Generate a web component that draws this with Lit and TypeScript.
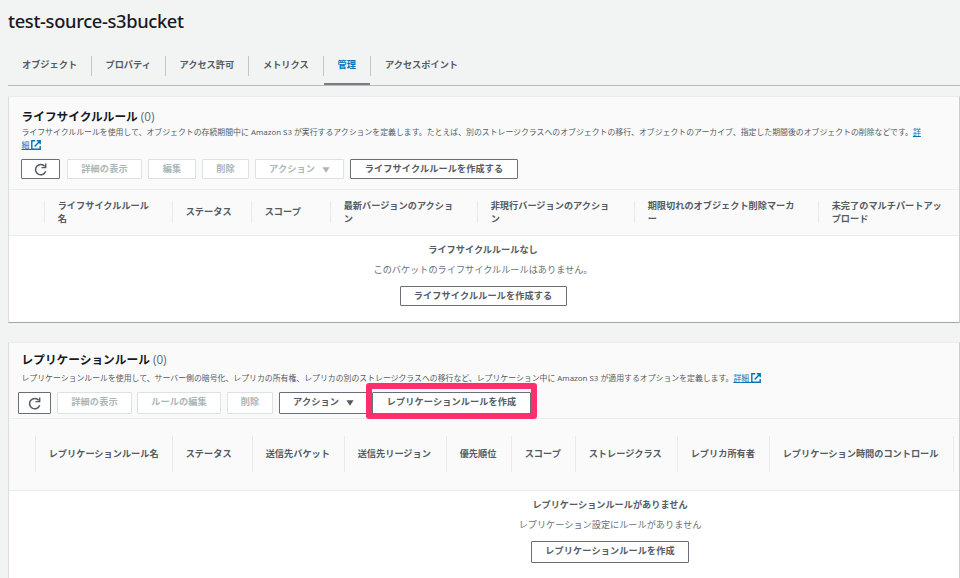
import { LitElement, html, css, svg } from "lit";
import { customElement, property } from "lit/decorators.js";
import { styleMap } from "lit/directives/style-map.js";
import { classMap } from "lit/directives/class-map.js";

interface Btn {
  label: string;
  width: number;
  gap: number;
  kind?: "refresh" | "menu";
  disabled?: boolean;
  marked?: boolean;
}
interface Col {
  label: string;
  width: number;
}

const TABS = [
  { label: "オブジェクト", width: 83.5 },
  { label: "プロパティ", width: 74 },
  { label: "アクセス許可", width: 83.5 },
  { label: "メトリクス", width: 74.5 },
  { label: "管理", width: 47.5, active: true },
  { label: "アクセスポイント", width: 102 },
];

const refreshIcon = svg`<path d="M10 3.1A4.8 4.8 0 1 0 10.8 7.7" fill="none" stroke="currentColor" stroke-width="1.4"/><path d="M10.8 0.5V4.3H6.9" fill="none" stroke="currentColor" stroke-width="1.3"/>`;

@customElement("aws-button")
export class AwsButton extends LitElement {
  @property({ type: Object }) data!: Btn;
  static styles = css`
    :host { display: block; flex: none; height: 100%; position: relative; }
    .btn {
      box-sizing: border-box; width: 100%; height: 100%; margin: 0; padding: 0 0 var(--lift, 0px);
      display: flex; align-items: center; justify-content: center; gap: 7px;
      background: #fff; border: 1px solid #686f78; border-radius: 1px; color: #545b64;
      font: 700 9.17px/12px "Noto Sans", "Noto Sans CJK JP", sans-serif;
      letter-spacing: 0.1px; white-space: nowrap;
    }
    .disabled { color: #aab7b8; border-color: #dce1e1; }
    .icon { width: 13px; height: 13px; display: block; margin-top: var(--lift, 0px); }
    .caret { width: 8px; height: 6px; display: block; margin-top: 1px; }
    .mark {
      position: absolute; left: -6px; top: -9px; width: 171px; height: 36px;
      box-sizing: border-box; border: 6px solid #ff2e6c; border-radius: 3px;
    }
  `;
  render() {
    const d = this.data;
    return html`<button class=${classMap({ btn: true, disabled: !!d.disabled })}>
        ${d.kind === "refresh"
          ? html`<svg class="icon" viewBox="0 0 12 12">${refreshIcon}</svg>`
          : html`<span>${d.label}</span>`}
        ${d.kind === "menu"
          ? html`<svg class="caret" viewBox="0 0 8 6"><path d="M.4 .3H7.6L4 5.8Z" fill="currentColor" /></svg>`
          : null}
      </button>
      ${d.marked ? html`<div class="mark"></div>` : null}`;
  }
}

@customElement("rule-card")
export class RuleCard extends LitElement {
  @property() heading = "";
  @property({ type: Array }) buttons: Btn[] = [];
  @property({ type: Array }) columns: Col[] = [];
  @property() emptyTitle = "";
  @property() emptyText = "";
  @property({ type: Object }) emptyButton!: Btn;
  @property({ type: Boolean, reflect: true }) tall = false;
  static styles = css`
    :host {
      display: block; box-sizing: border-box; width: 952px; height: 227px;
      border: 1px solid #d9dddd; border-top-color: #eaeded; border-right-color: #c9cdcf; border-bottom-color: #9ea8ab;
      background: #fff; color: #545b64;
    }
    .head { box-sizing: border-box; height: 93px; padding: 11px 0 0 12px; background: #fafafa; border-bottom: 1px solid #eaeded; }
    h2 { margin: 0; height: 16px; padding-left: 0.5px; font-size: 11.7px; line-height: 16px; font-weight: 700; color: #16191f; white-space: nowrap; }
    h2 span { font-weight: 400; color: #687078; }
    .desc { height: 26px; width: 912px; padding-left: 0.5px; font-size: 7.89px; line-height: 13px; margin-top: 2px; word-break: break-all; white-space: nowrap; }
    .bar { display: flex; height: 20px; margin-top: 7px; }
    .cols { box-sizing: border-box; height: 46px; padding: 11px 0 12px; display: flex; background: #fafafa; border-bottom: 1px solid #eaeded; }
    .col {
      box-sizing: border-box; flex: none; display: flex; align-items: center; padding: 0 0 1px 12.7px;
      border-left: 1px solid #e9ebeb; font-size: 9.18px; line-height: 13px; font-weight: 700; white-space: pre;
    }
    .lead { border-left: 0; }
    .empty { display: flex; flex-direction: column; align-items: center; padding: 7px 2px 0 0; font-size: 9.17px; line-height: 14px; }
    .empty b { color: #545b64; }
    .sub { margin-top: 6px; color: #687078; }
    .emptybtn { height: 20px; margin-top: 9px; }
    :host([tall]) { height: 260px; border-bottom: 0; }
    :host([tall]) .head { height: 76px; padding-top: 8px; }
    :host([tall]) .desc { height: 13px; margin-top: 5px; }
    :host([tall]) .bar { height: 22px; margin: 7px 0 0 -3px; --lift: 2px; }
    :host([tall]) .cols { height: 72px; padding: 17px 0 18px; }
    :host([tall]) .empty { padding-left: 254px; }
    :host([tall]) .emptybtn { height: 22px; margin-top: 9px; --lift: 2px; }
  `;
  render() {
    return html`
      <div class="head">
        <h2>${this.heading} <span>(0)</span></h2>
        <div class="desc"><slot></slot></div>
        <div class="bar">
          ${this.buttons.map(
            (b) => html`<aws-button .data=${b} style=${styleMap({ width: b.width + "px", marginRight: b.gap + "px" })}></aws-button>`
          )}
        </div>
      </div>
      <div class="cols">
        ${this.columns.map(
          (c, i) => html`<div class=${classMap({ col: true, lead: i === 0 })} style=${styleMap({ width: c.width + "px" })}>${c.label}</div>`
        )}
      </div>
      <div class="empty">
        <b>${this.emptyTitle}</b>
        <div class="sub">${this.emptyText}</div>
        <div class="emptybtn"><aws-button .data=${this.emptyButton} style=${styleMap({ width: this.emptyButton.width + "px" })}></aws-button></div>
      </div>`;
  }
}

const LIFE_BUTTONS: Btn[] = [
  { label: "", width: 39, gap: 7, kind: "refresh" },
  { label: "詳細の表示", width: 75, gap: 6, disabled: true },
  { label: "編集", width: 48, gap: 6, disabled: true },
  { label: "削除", width: 47, gap: 6, disabled: true },
  { label: "アクション", width: 89, gap: 6, kind: "menu", disabled: true },
  { label: "ライフサイクルルールを作成する", width: 168, gap: 0 },
];
const REPL_BUTTONS: Btn[] = [
  { label: "", width: 33, gap: 6, kind: "refresh" },
  { label: "詳細の表示", width: 75, gap: 5, disabled: true },
  { label: "ルールの編集", width: 84, gap: 6, disabled: true },
  { label: "削除", width: 46, gap: 6, disabled: true },
  { label: "アクション", width: 89, gap: 4, kind: "menu" },
  { label: "レプリケーションルールを作成", width: 159, gap: 0, marked: true },
];
const LIFE_COLS: Col[] = [
  { label: "", width: 35 },
  { label: "ライフサイクルルール\n名", width: 128 },
  { label: "ステータス", width: 79 },
  { label: "スコープ", width: 79 },
  { label: "最新バージョンのアクショ\nン", width: 147 },
  { label: "非現行バージョンのアクショ\nン", width: 157 },
  { label: "期限切れのオブジェクト削除マーカ\nー", width: 184 },
  { label: "未完了のマルチパートアッ\nプロード", width: 140 },
];
const REPL_COLS: Col[] = [
  { label: "", width: 26 },
  { label: "レプリケーションルール名", width: 137 },
  { label: "ステータス", width: 80 },
  { label: "送信先バケット", width: 92 },
  { label: "送信先リージョン", width: 102 },
  { label: "優先順位", width: 65 },
  { label: "スコープ", width: 64 },
  { label: "ストレージクラス", width: 102 },
  { label: "レプリカ所有者", width: 92 },
  { label: "レプリケーション時間のコントロール", width: 184 },
  { label: "", width: 6 },
];

@customElement("app-root")
export class AppRoot extends LitElement {
  static styles = css`
    :host {
      display: block; box-sizing: border-box; width: 960px; height: 578px; overflow: hidden;
      padding-left: 8px; background: #f2f3f3; color: #545b64;
      font-family: "Noto Sans", "Noto Sans CJK JP", sans-serif;
    }
    h1 { margin: 0; padding-top: 8px; height: 26px; font-size: 18.3px; line-height: 26px; font-weight: 500; color: #16191f; letter-spacing: -0.33px; }
    .tabs { box-sizing: border-box; display: flex; height: 52px; padding-top: 22px; border-bottom: 1px solid #b3bdbe; }
    .tab {
      box-sizing: border-box; height: 20px; padding-left: 14px; border-right: 1px solid #bfc8c9; flex: none;
      font-size: 9.2px; line-height: 18px; font-weight: 700; white-space: nowrap; position: relative;
    }
    .tab:last-child { border-right: 0; }
    .active { color: #0073bb; }
    .active::after { content: ""; position: absolute; left: 0; right: 0; top: 27px; height: 2px; background: #777f86; }
    rule-card { margin-top: 10px; }
    rule-card + rule-card { margin-top: 19px; }
    a { color: #0073bb; text-decoration: underline; text-underline-offset: 1px; }
    .ext { width: 10px; height: 10px; vertical-align: -2px; margin-left: 0; }
  `;
  private ext() {
    return html`<svg class="ext" viewBox="0 0 10 10" fill="none" stroke="#0073bb" stroke-width="1.4">
      <path d="M4.2 .8H.8V9.2H9.2V6M5.8 .8H9.2V4.2M9 1L3.6 6.4" />
    </svg>`;
  }
  render() {
    return html`
      <h1>test-source-s3bucket</h1>
      <nav class="tabs">
        ${TABS.map((t) => html`<div class=${classMap({ tab: true, active: !!t.active })} style=${styleMap({ width: t.width + "px" })}>${t.label}</div>`)}
      </nav>
      <rule-card
        heading="ライフサイクルルール"
        .buttons=${LIFE_BUTTONS}
        .columns=${LIFE_COLS}
        emptyTitle="ライフサイクルルールなし"
        emptyText="このバケットのライフサイクルルールはありません。"
        .emptyButton=${{ label: "ライフサイクルルールを作成する", width: 167, gap: 0 }}
      >ライフサイクルルールを使用して、オブジェクトの存続期間中に Amazon S3 が実行するアクションを定義します。たとえば、別のストレージクラスへのオブジェクトの移行、オブジェクトのアーカイブ、指定した期間後のオブジェクトの削除などです。<a>詳<br />細 </a>${this.ext()}</rule-card>
      <rule-card
        tall
        heading="レプリケーションルール"
        .buttons=${REPL_BUTTONS}
        .columns=${REPL_COLS}
        emptyTitle="レプリケーションルールがありません"
        emptyText="レプリケーション設定にルールがありません"
        .emptyButton=${{ label: "レプリケーションルールを作成", width: 158, gap: 0 }}
      >レプリケーションルールを使用して、サーバー側の暗号化、レプリカの所有権、レプリカの別のストレージクラスへの移行など、レプリケーション中に Amazon S3 が適用するオプションを定義します。<a>詳細 </a>${this.ext()}</rule-card>
    `;
  }
}
